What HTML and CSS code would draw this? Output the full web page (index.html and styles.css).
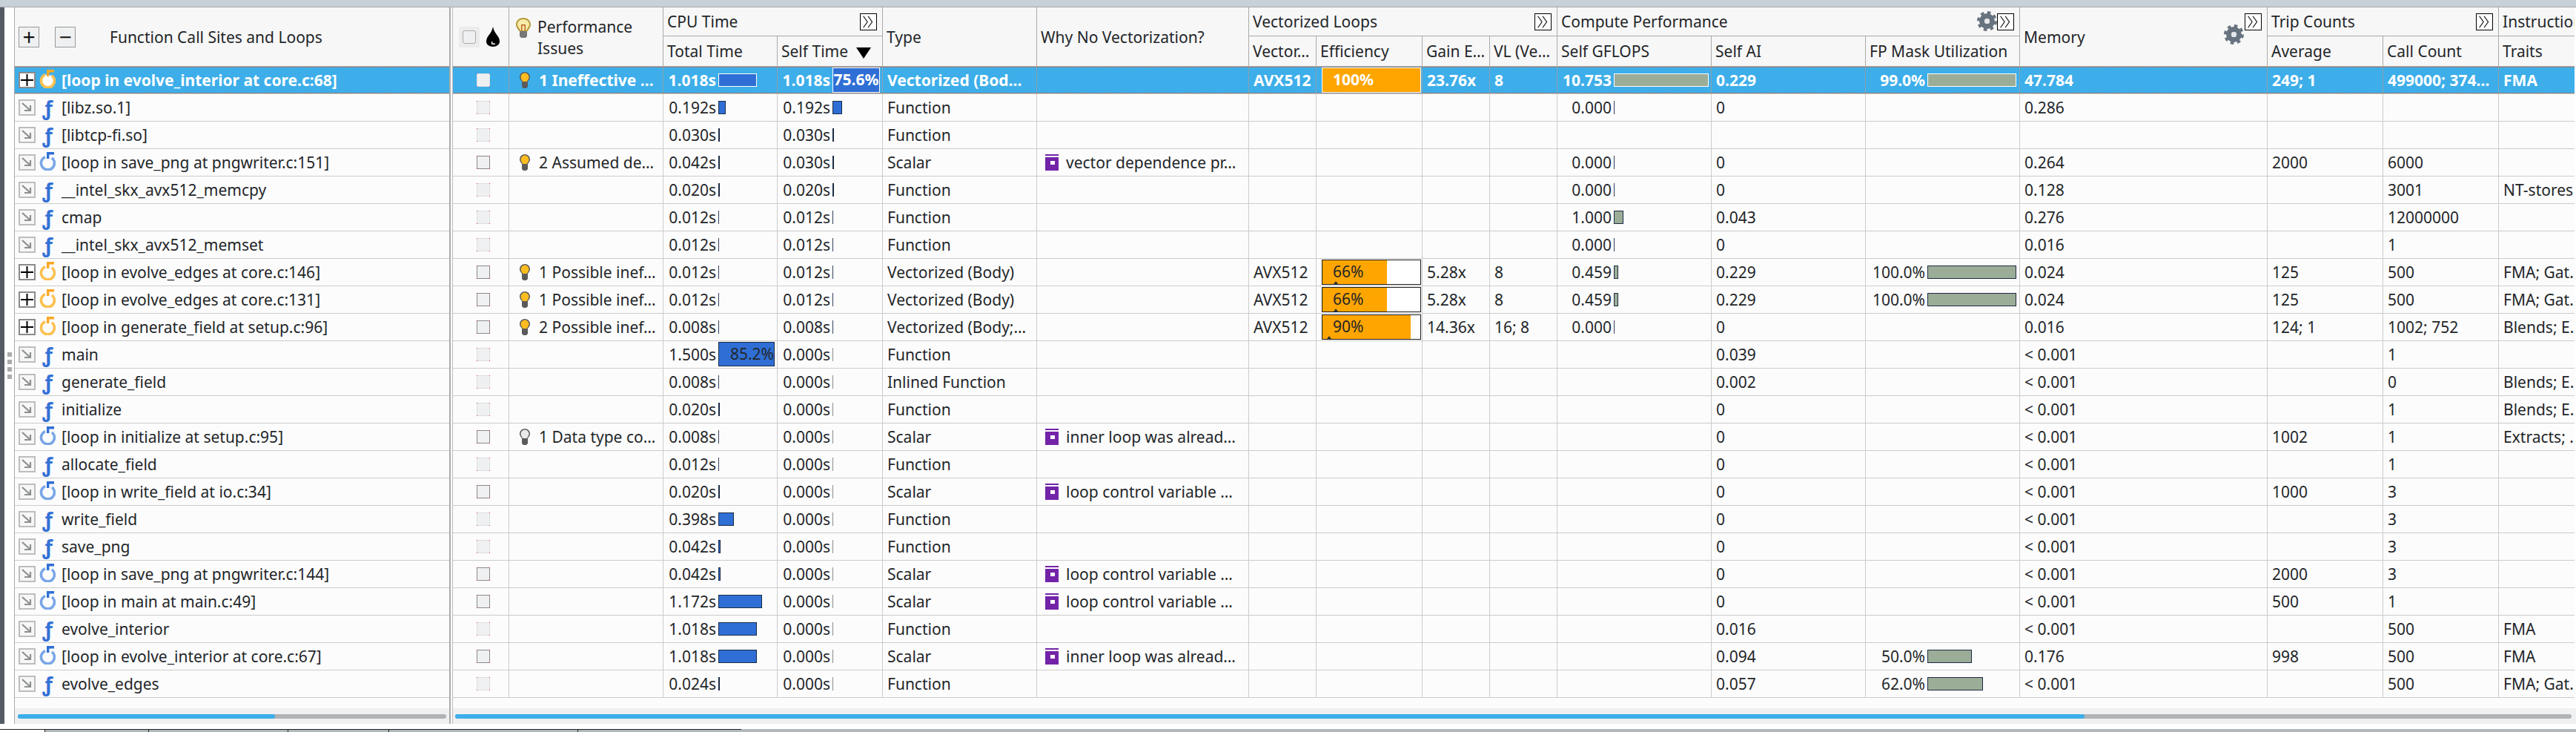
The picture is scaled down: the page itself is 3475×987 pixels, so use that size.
FILE: index.html
```html
<!DOCTYPE html>
<html>
<head>
<meta charset="utf-8">
<title>Survey Report</title>
<link rel="stylesheet" href="styles.css">
</head>
<body>
<svg class="sprite">
  <symbol id="i-loop" viewBox="0 0 22 25">
    <path d="M8 6.600A9 9 0 1 0 17 7.800" stroke-width="3.600" class="ring"/>
    <path d="M10 0h10v3.600h-6.600v5.400h-3.400z" class="flag"/>
  </symbol>
  <symbol id="i-plus" viewBox="0 0 19 18">
    <path d="M9.500 1v16M1 9h17" stroke="#000" stroke-width="2" fill="none"/>
  </symbol>
  <symbol id="i-arrow" viewBox="0 0 19 18">
    <path d="M3 3l11 10M14 6v7H6" stroke="#8d8f91" stroke-width="2.200" fill="none"/>
  </symbol>
  <symbol id="i-bulb" viewBox="0 0 16 22">
    <path d="M8 0c4 0 7 3 7 7 0 3-2 4-3 6H4C3 11 1 10 1 7c0-4 3-7 7-7z" fill="#5b5b5b"/>
    <path d="M8 1.500c3 0 5.500 2.500 5.500 5.500 0 2.500-2 4-2.500 6H5C4.500 11 2.500 9.500 2.500 7 2.500 4 5 1.500 8 1.500z" fill="currentColor"/>
    <path d="M4 13h8v7l-2 2H6l-2-2z" fill="#5b5b5b"/>
  </symbol>
  <symbol id="i-bulb-head" viewBox="0 0 20 27">
    <path d="M10 0c6 0 10 4 10 9 0 4-3 6-4 9H4C3 15 0 13 0 9c0-5 4-9 10-9z" fill="#b79a3a"/>
    <path d="M10 2c4.500 0 8 3 8 7 0 3-3 5-4 8H6C5 14 2 12 2 9c0-4 3.500-7 8-7z" fill="#f9ecaa"/>
    <path d="M7 9h6v8H7z" fill="#b8641e"/>
    <path d="M8.500 10.500h3V17h-3z" fill="#fff0b0"/>
    <path d="M5 18h10v7l-2 2H7l-2-2z" fill="#777"/>
  </symbol>
  <symbol id="i-drop" viewBox="0 0 18 27">
    <path d="M9 0c1 5 3 8 6 12 2 3 3 5 3 8 0 4-4 7-9 7s-9-3-9-7c0-3 1-5 3-8C6 8 8 5 9 0z" fill="#000"/>
    <path d="M7 20h1.500v4H7z" fill="#fff"/>
    <path d="M8.500 22.500H12V24H8.500z" fill="#fff"/>
  </symbol>
  <symbol id="i-book" viewBox="0 0 18 22">
    <path d="M0 0h18v2H0z" fill="#7323a8"/>
    <path d="M0 4h18v18H0z" fill="#7323a8"/>
    <path d="M7 9h6v5H7z" fill="#fff"/>
  </symbol>
  <symbol id="i-chev" viewBox="0 0 23 23">
    <path d="M4 3l6 8.500-6 8.500M11 3l6 8.500-6 8.500" stroke="#111" stroke-width="1.300" fill="none"/>
  </symbol>
  <symbol id="i-gear" viewBox="0 0 27 27">
    <circle cx="13.500" cy="13.500" r="11.500" stroke="#687380" stroke-width="4" stroke-dasharray="4.500 4.530" fill="none"/>
    <circle cx="13.500" cy="13.500" r="7" stroke="#687380" stroke-width="7" fill="none"/>
    <circle cx="13.500" cy="13.500" r="3.500" fill="#e4e7ea"/>
  </symbol>
</svg>

<div class="top-band"></div>

<div class="workspace">
  <div class="rail"></div>
  <div class="grip"><i></i><i></i><i></i><i></i></div>

  <div class="tree-pane">
    <div class="tree-head">
      <button class="head-btn">+</button>
      <button class="head-btn head-btn-minus">−</button>
      <span class="tree-title">Function Call Sites and Loops</span>
    </div>
    <div class="tree-rows">
      <div class="row sel"><span class="exp exp-plus"><svg><use href="#i-plus"/></svg></span><svg class="ic-loop hot"><use href="#i-loop"/></svg><span class="name">[loop in evolve_interior at core.c:68]</span></div>
      <div class="row"><span class="exp"><svg><use href="#i-arrow"/></svg></span><span class="ic-f">ƒ</span><span class="name">[libz.so.1]</span></div>
      <div class="row"><span class="exp"><svg><use href="#i-arrow"/></svg></span><span class="ic-f">ƒ</span><span class="name">[libtcp-fi.so]</span></div>
      <div class="row"><span class="exp"><svg><use href="#i-arrow"/></svg></span><svg class="ic-loop"><use href="#i-loop"/></svg><span class="name">[loop in save_png at pngwriter.c:151]</span></div>
      <div class="row"><span class="exp"><svg><use href="#i-arrow"/></svg></span><span class="ic-f">ƒ</span><span class="name">__intel_skx_avx512_memcpy</span></div>
      <div class="row"><span class="exp"><svg><use href="#i-arrow"/></svg></span><span class="ic-f">ƒ</span><span class="name">cmap</span></div>
      <div class="row"><span class="exp"><svg><use href="#i-arrow"/></svg></span><span class="ic-f">ƒ</span><span class="name">__intel_skx_avx512_memset</span></div>
      <div class="row"><span class="exp exp-plus"><svg><use href="#i-plus"/></svg></span><svg class="ic-loop hot"><use href="#i-loop"/></svg><span class="name">[loop in evolve_edges at core.c:146]</span></div>
      <div class="row"><span class="exp exp-plus"><svg><use href="#i-plus"/></svg></span><svg class="ic-loop hot"><use href="#i-loop"/></svg><span class="name">[loop in evolve_edges at core.c:131]</span></div>
      <div class="row"><span class="exp exp-plus"><svg><use href="#i-plus"/></svg></span><svg class="ic-loop hot"><use href="#i-loop"/></svg><span class="name">[loop in generate_field at setup.c:96]</span></div>
      <div class="row"><span class="exp"><svg><use href="#i-arrow"/></svg></span><span class="ic-f">ƒ</span><span class="name">main</span></div>
      <div class="row"><span class="exp"><svg><use href="#i-arrow"/></svg></span><span class="ic-f">ƒ</span><span class="name">generate_field</span></div>
      <div class="row"><span class="exp"><svg><use href="#i-arrow"/></svg></span><span class="ic-f">ƒ</span><span class="name">initialize</span></div>
      <div class="row"><span class="exp"><svg><use href="#i-arrow"/></svg></span><svg class="ic-loop"><use href="#i-loop"/></svg><span class="name">[loop in initialize at setup.c:95]</span></div>
      <div class="row"><span class="exp"><svg><use href="#i-arrow"/></svg></span><span class="ic-f">ƒ</span><span class="name">allocate_field</span></div>
      <div class="row"><span class="exp"><svg><use href="#i-arrow"/></svg></span><svg class="ic-loop"><use href="#i-loop"/></svg><span class="name">[loop in write_field at io.c:34]</span></div>
      <div class="row"><span class="exp"><svg><use href="#i-arrow"/></svg></span><span class="ic-f">ƒ</span><span class="name">write_field</span></div>
      <div class="row"><span class="exp"><svg><use href="#i-arrow"/></svg></span><span class="ic-f">ƒ</span><span class="name">save_png</span></div>
      <div class="row"><span class="exp"><svg><use href="#i-arrow"/></svg></span><svg class="ic-loop"><use href="#i-loop"/></svg><span class="name">[loop in save_png at pngwriter.c:144]</span></div>
      <div class="row"><span class="exp"><svg><use href="#i-arrow"/></svg></span><svg class="ic-loop"><use href="#i-loop"/></svg><span class="name">[loop in main at main.c:49]</span></div>
      <div class="row"><span class="exp"><svg><use href="#i-arrow"/></svg></span><span class="ic-f">ƒ</span><span class="name">evolve_interior</span></div>
      <div class="row"><span class="exp"><svg><use href="#i-arrow"/></svg></span><svg class="ic-loop"><use href="#i-loop"/></svg><span class="name">[loop in evolve_interior at core.c:67]</span></div>
      <div class="row"><span class="exp"><svg><use href="#i-arrow"/></svg></span><span class="ic-f">ƒ</span><span class="name">evolve_edges</span></div>
    </div>
    <div class="scroll scroll-left"><div class="track"><div class="thumb" style="width:60%"></div></div></div>
  </div>

  <div class="split-gap"></div>

  <div class="grid-pane">
    <div class="grid-wrap">
      <table class="grid">
        <colgroup>
          <col class="c-chk"><col class="c-perf"><col class="c-total"><col class="c-self"><col class="c-type"><col class="c-why">
          <col class="c-isa"><col class="c-eff"><col class="c-gain"><col class="c-vl">
          <col class="c-wide"><col class="c-wide"><col class="c-wide"><col class="c-mem"><col class="c-trip"><col class="c-trip"><col class="c-traits">
        </colgroup>
        <thead>
          <tr class="head-top">
            <th rowspan="2"><div class="head-chk"><span class="chk-wrap"><span class="chk-head"></span></span><svg class="ic-drop"><use href="#i-drop"/></svg></div></th>
            <th rowspan="2"><div class="head-perf"><svg class="ic-bulb-head"><use href="#i-bulb-head"/></svg><span>Performance<br>Issues</span></div></th>
            <th colspan="2"><div class="group"><span>CPU Time</span><svg class="chev"><use href="#i-chev"/></svg></div></th>
            <th rowspan="2">Type</th>
            <th rowspan="2">Why No Vectorization?</th>
            <th colspan="4"><div class="group"><span>Vectorized Loops</span><svg class="chev"><use href="#i-chev"/></svg></div></th>
            <th colspan="3"><div class="group"><span>Compute Performance</span><svg class="ic-gear"><use href="#i-gear"/></svg><svg class="chev chev-tight"><use href="#i-chev"/></svg></div></th>
            <th rowspan="2" class="head-mem">Memory<svg class="ic-gear mem-gear"><use href="#i-gear"/></svg><svg class="chev mem-chev"><use href="#i-chev"/></svg></th>
            <th colspan="2"><div class="group"><span>Trip Counts</span><svg class="chev"><use href="#i-chev"/></svg></div></th>
            <th>Instructions</th>
          </tr>
          <tr class="head-sub">
            <th>Total Time</th>
            <th>Self Time <span class="sort"></span></th>
            <th>Vector…</th>
            <th>Efficiency</th>
            <th>Gain E…</th>
            <th>VL (Ve…</th>
            <th>Self GFLOPS</th>
            <th>Self AI</th>
            <th>FP Mask Utilization</th>
            <th>Average</th>
            <th>Call Count</th>
            <th>Traits</th>
          </tr>
        </thead>
        <tbody>
          <tr class="sel">
            <td><div class="chk"></div></td>
            <td class="cell-icon"><div class="with-icon"><svg class="ic-bulb"><use href="#i-bulb"/></svg>1 Ineffective …</div></td>
            <td class="split"><div class="pair pair-t"><span class="num">1.018s</span><i class="bar" style="width:52px"></i></div></td>
            <td class="split"><div class="pair pair-t"><span class="num">1.018s</span><i class="bar bar-full bar-self">75.6%</i></div></td>
            <td>Vectorized (Bod…</td><td></td>
            <td>AVX512</td>
            <td class="split"><div class="eff"><div class="eff-fill" style="width:100%"></div><span class="eff-label">100%</span></div></td>
            <td>23.76x</td><td>8</td>
            <td class="split"><div class="pair pair-g"><span class="num">10.753</span><i class="bar bar-g" style="width:128px"></i></div></td>
            <td>0.229</td>
            <td class="split"><div class="pair pair-f"><span class="num">99.0%</span><i class="bar bar-g" style="width:120px"></i></div></td>
            <td>47.784</td><td>249; 1</td><td>499000; 374…</td><td>FMA</td>
          </tr>
          <tr>
            <td><div class="chk"></div></td><td></td>
            <td class="split"><div class="pair pair-t"><span class="num">0.192s</span><i class="bar" style="width:10px"></i></div></td>
            <td class="split"><div class="pair pair-t"><span class="num">0.192s</span><i class="bar" style="width:13px"></i></div></td>
            <td>Function</td><td></td><td></td><td></td><td></td><td></td>
            <td class="split"><div class="pair pair-g"><span class="num">0.000</span><i class="bar thin"></i></div></td>
            <td>0</td><td></td><td>0.286</td><td></td><td></td><td></td>
          </tr>
          <tr>
            <td><div class="chk"></div></td><td></td>
            <td class="split"><div class="pair pair-t"><span class="num">0.030s</span><i class="bar" style="width:2px"></i></div></td>
            <td class="split"><div class="pair pair-t"><span class="num">0.030s</span><i class="bar" style="width:2px"></i></div></td>
            <td>Function</td><td></td><td></td><td></td><td></td><td></td><td></td><td></td><td></td><td></td><td></td><td></td><td></td>
          </tr>
          <tr>
            <td><div class="chk chk-dark"></div></td>
            <td class="cell-icon"><div class="with-icon"><svg class="ic-bulb"><use href="#i-bulb"/></svg>2 Assumed de…</div></td>
            <td class="split"><div class="pair pair-t"><span class="num">0.042s</span><i class="bar" style="width:2px"></i></div></td>
            <td class="split"><div class="pair pair-t"><span class="num">0.030s</span><i class="bar" style="width:2px"></i></div></td>
            <td>Scalar</td>
            <td class="cell-icon"><div class="with-book"><svg class="ic-book"><use href="#i-book"/></svg>vector dependence pr…</div></td>
            <td></td><td></td><td></td><td></td>
            <td class="split"><div class="pair pair-g"><span class="num">0.000</span><i class="bar thin"></i></div></td>
            <td>0</td><td></td><td>0.264</td><td>2000</td><td>6000</td><td></td>
          </tr>
          <tr>
            <td><div class="chk"></div></td><td></td>
            <td class="split"><div class="pair pair-t"><span class="num">0.020s</span><i class="bar" style="width:2px"></i></div></td>
            <td class="split"><div class="pair pair-t"><span class="num">0.020s</span><i class="bar" style="width:2px"></i></div></td>
            <td>Function</td><td></td><td></td><td></td><td></td><td></td>
            <td class="split"><div class="pair pair-g"><span class="num">0.000</span><i class="bar thin"></i></div></td>
            <td>0</td><td></td><td>0.128</td><td></td><td>3001</td><td>NT-stores</td>
          </tr>
          <tr>
            <td><div class="chk"></div></td><td></td>
            <td class="split"><div class="pair pair-t"><span class="num">0.012s</span><i class="bar thin"></i></div></td>
            <td class="split"><div class="pair pair-t"><span class="num">0.012s</span><i class="bar thin"></i></div></td>
            <td>Function</td><td></td><td></td><td></td><td></td><td></td>
            <td class="split"><div class="pair pair-g"><span class="num">1.000</span><i class="bar bar-g" style="width:13px"></i></div></td>
            <td>0.043</td><td></td><td>0.276</td><td></td><td>12000000</td><td></td>
          </tr>
          <tr>
            <td><div class="chk"></div></td><td></td>
            <td class="split"><div class="pair pair-t"><span class="num">0.012s</span><i class="bar thin"></i></div></td>
            <td class="split"><div class="pair pair-t"><span class="num">0.012s</span><i class="bar thin"></i></div></td>
            <td>Function</td><td></td><td></td><td></td><td></td><td></td>
            <td class="split"><div class="pair pair-g"><span class="num">0.000</span><i class="bar thin"></i></div></td>
            <td>0</td><td></td><td>0.016</td><td></td><td>1</td><td></td>
          </tr>
          <tr>
            <td><div class="chk chk-dark"></div></td>
            <td class="cell-icon"><div class="with-icon"><svg class="ic-bulb"><use href="#i-bulb"/></svg>1 Possible inef…</div></td>
            <td class="split"><div class="pair pair-t"><span class="num">0.012s</span><i class="bar thin"></i></div></td>
            <td class="split"><div class="pair pair-t"><span class="num">0.012s</span><i class="bar thin"></i></div></td>
            <td>Vectorized (Body)</td><td></td><td>AVX512</td>
            <td class="split"><div class="eff"><div class="eff-fill" style="width:66%"></div><span class="eff-label">66%</span><i class="eff-tick"></i></div></td>
            <td>5.28x</td><td>8</td>
            <td class="split"><div class="pair pair-g"><span class="num">0.459</span><i class="bar bar-g" style="width:6px"></i></div></td>
            <td>0.229</td>
            <td class="split"><div class="pair pair-f"><span class="num">100.0%</span><i class="bar bar-g" style="width:120px"></i></div></td>
            <td>0.024</td><td>125</td><td>500</td><td>FMA; Gat…</td>
          </tr>
          <tr>
            <td><div class="chk chk-dark"></div></td>
            <td class="cell-icon"><div class="with-icon"><svg class="ic-bulb"><use href="#i-bulb"/></svg>1 Possible inef…</div></td>
            <td class="split"><div class="pair pair-t"><span class="num">0.012s</span><i class="bar thin"></i></div></td>
            <td class="split"><div class="pair pair-t"><span class="num">0.012s</span><i class="bar thin"></i></div></td>
            <td>Vectorized (Body)</td><td></td><td>AVX512</td>
            <td class="split"><div class="eff"><div class="eff-fill" style="width:66%"></div><span class="eff-label">66%</span><i class="eff-tick"></i></div></td>
            <td>5.28x</td><td>8</td>
            <td class="split"><div class="pair pair-g"><span class="num">0.459</span><i class="bar bar-g" style="width:6px"></i></div></td>
            <td>0.229</td>
            <td class="split"><div class="pair pair-f"><span class="num">100.0%</span><i class="bar bar-g" style="width:120px"></i></div></td>
            <td>0.024</td><td>125</td><td>500</td><td>FMA; Gat…</td>
          </tr>
          <tr>
            <td><div class="chk chk-dark"></div></td>
            <td class="cell-icon"><div class="with-icon"><svg class="ic-bulb"><use href="#i-bulb"/></svg>2 Possible inef…</div></td>
            <td class="split"><div class="pair pair-t"><span class="num">0.008s</span><i class="bar thin"></i></div></td>
            <td class="split"><div class="pair pair-t"><span class="num">0.008s</span><i class="bar thin"></i></div></td>
            <td>Vectorized (Body;…</td><td></td><td>AVX512</td>
            <td class="split"><div class="eff"><div class="eff-fill" style="width:90%"></div><span class="eff-label">90%</span><i class="eff-tick eff-tick-near"></i></div></td>
            <td>14.36x</td><td>16; 8</td>
            <td class="split"><div class="pair pair-g"><span class="num">0.000</span><i class="bar thin"></i></div></td>
            <td>0</td><td></td><td>0.016</td><td>124; 1</td><td>1002; 752</td><td>Blends; E…</td>
          </tr>
          <tr>
            <td><div class="chk"></div></td><td></td>
            <td class="split"><div class="pair pair-t"><span class="num">1.500s</span><i class="bar bar-full bar-main">85.2%</i></div></td>
            <td class="split"><div class="pair pair-t"><span class="num">0.000s</span><i class="bar thin zero"></i></div></td>
            <td>Function</td><td></td><td></td><td></td><td></td><td></td><td></td>
            <td>0.039</td><td></td><td>&lt; 0.001</td><td></td><td>1</td><td></td>
          </tr>
          <tr>
            <td><div class="chk"></div></td><td></td>
            <td class="split"><div class="pair pair-t"><span class="num">0.008s</span><i class="bar thin"></i></div></td>
            <td class="split"><div class="pair pair-t"><span class="num">0.000s</span><i class="bar thin zero"></i></div></td>
            <td>Inlined Function</td><td></td><td></td><td></td><td></td><td></td><td></td>
            <td>0.002</td><td></td><td>&lt; 0.001</td><td></td><td>0</td><td>Blends; E…</td>
          </tr>
          <tr>
            <td><div class="chk"></div></td><td></td>
            <td class="split"><div class="pair pair-t"><span class="num">0.020s</span><i class="bar" style="width:2px"></i></div></td>
            <td class="split"><div class="pair pair-t"><span class="num">0.000s</span><i class="bar thin zero"></i></div></td>
            <td>Function</td><td></td><td></td><td></td><td></td><td></td><td></td>
            <td>0</td><td></td><td>&lt; 0.001</td><td></td><td>1</td><td>Blends; E…</td>
          </tr>
          <tr>
            <td><div class="chk chk-dark"></div></td>
            <td class="cell-icon"><div class="with-icon"><svg class="ic-bulb bulb-off"><use href="#i-bulb"/></svg>1 Data type co…</div></td>
            <td class="split"><div class="pair pair-t"><span class="num">0.008s</span><i class="bar thin"></i></div></td>
            <td class="split"><div class="pair pair-t"><span class="num">0.000s</span><i class="bar thin zero"></i></div></td>
            <td>Scalar</td>
            <td class="cell-icon"><div class="with-book"><svg class="ic-book"><use href="#i-book"/></svg>inner loop was alread…</div></td>
            <td></td><td></td><td></td><td></td><td></td>
            <td>0</td><td></td><td>&lt; 0.001</td><td>1002</td><td>1</td><td>Extracts; …</td>
          </tr>
          <tr>
            <td><div class="chk"></div></td><td></td>
            <td class="split"><div class="pair pair-t"><span class="num">0.012s</span><i class="bar thin"></i></div></td>
            <td class="split"><div class="pair pair-t"><span class="num">0.000s</span><i class="bar thin zero"></i></div></td>
            <td>Function</td><td></td><td></td><td></td><td></td><td></td><td></td>
            <td>0</td><td></td><td>&lt; 0.001</td><td></td><td>1</td><td></td>
          </tr>
          <tr>
            <td><div class="chk chk-dark"></div></td><td></td>
            <td class="split"><div class="pair pair-t"><span class="num">0.020s</span><i class="bar" style="width:2px"></i></div></td>
            <td class="split"><div class="pair pair-t"><span class="num">0.000s</span><i class="bar thin zero"></i></div></td>
            <td>Scalar</td>
            <td class="cell-icon"><div class="with-book"><svg class="ic-book"><use href="#i-book"/></svg>loop control variable …</div></td>
            <td></td><td></td><td></td><td></td><td></td>
            <td>0</td><td></td><td>&lt; 0.001</td><td>1000</td><td>3</td><td></td>
          </tr>
          <tr>
            <td><div class="chk"></div></td><td></td>
            <td class="split"><div class="pair pair-t"><span class="num">0.398s</span><i class="bar" style="width:21px"></i></div></td>
            <td class="split"><div class="pair pair-t"><span class="num">0.000s</span><i class="bar thin zero"></i></div></td>
            <td>Function</td><td></td><td></td><td></td><td></td><td></td><td></td>
            <td>0</td><td></td><td>&lt; 0.001</td><td></td><td>3</td><td></td>
          </tr>
          <tr>
            <td><div class="chk"></div></td><td></td>
            <td class="split"><div class="pair pair-t"><span class="num">0.042s</span><i class="bar" style="width:3px"></i></div></td>
            <td class="split"><div class="pair pair-t"><span class="num">0.000s</span><i class="bar thin zero"></i></div></td>
            <td>Function</td><td></td><td></td><td></td><td></td><td></td><td></td>
            <td>0</td><td></td><td>&lt; 0.001</td><td></td><td>3</td><td></td>
          </tr>
          <tr>
            <td><div class="chk chk-dark"></div></td><td></td>
            <td class="split"><div class="pair pair-t"><span class="num">0.042s</span><i class="bar" style="width:3px"></i></div></td>
            <td class="split"><div class="pair pair-t"><span class="num">0.000s</span><i class="bar thin zero"></i></div></td>
            <td>Scalar</td>
            <td class="cell-icon"><div class="with-book"><svg class="ic-book"><use href="#i-book"/></svg>loop control variable …</div></td>
            <td></td><td></td><td></td><td></td><td></td>
            <td>0</td><td></td><td>&lt; 0.001</td><td>2000</td><td>3</td><td></td>
          </tr>
          <tr>
            <td><div class="chk chk-dark"></div></td><td></td>
            <td class="split"><div class="pair pair-t"><span class="num">1.172s</span><i class="bar" style="width:59px"></i></div></td>
            <td class="split"><div class="pair pair-t"><span class="num">0.000s</span><i class="bar thin zero"></i></div></td>
            <td>Scalar</td>
            <td class="cell-icon"><div class="with-book"><svg class="ic-book"><use href="#i-book"/></svg>loop control variable …</div></td>
            <td></td><td></td><td></td><td></td><td></td>
            <td>0</td><td></td><td>&lt; 0.001</td><td>500</td><td>1</td><td></td>
          </tr>
          <tr>
            <td><div class="chk"></div></td><td></td>
            <td class="split"><div class="pair pair-t"><span class="num">1.018s</span><i class="bar" style="width:52px"></i></div></td>
            <td class="split"><div class="pair pair-t"><span class="num">0.000s</span><i class="bar thin zero"></i></div></td>
            <td>Function</td><td></td><td></td><td></td><td></td><td></td><td></td>
            <td>0.016</td><td></td><td>&lt; 0.001</td><td></td><td>500</td><td>FMA</td>
          </tr>
          <tr>
            <td><div class="chk chk-dark"></div></td><td></td>
            <td class="split"><div class="pair pair-t"><span class="num">1.018s</span><i class="bar" style="width:52px"></i></div></td>
            <td class="split"><div class="pair pair-t"><span class="num">0.000s</span><i class="bar thin zero"></i></div></td>
            <td>Scalar</td>
            <td class="cell-icon"><div class="with-book"><svg class="ic-book"><use href="#i-book"/></svg>inner loop was alread…</div></td>
            <td></td><td></td><td></td><td></td><td></td>
            <td>0.094</td>
            <td class="split"><div class="pair pair-f"><span class="num">50.0%</span><i class="bar bar-g" style="width:60px"></i></div></td>
            <td>0.176</td><td>998</td><td>500</td><td>FMA</td>
          </tr>
          <tr>
            <td><div class="chk"></div></td><td></td>
            <td class="split"><div class="pair pair-t"><span class="num">0.024s</span><i class="bar" style="width:2px"></i></div></td>
            <td class="split"><div class="pair pair-t"><span class="num">0.000s</span><i class="bar thin zero"></i></div></td>
            <td>Function</td><td></td><td></td><td></td><td></td><td></td><td></td>
            <td>0.057</td>
            <td class="split"><div class="pair pair-f"><span class="num">62.0%</span><i class="bar bar-g" style="width:75px"></i></div></td>
            <td>&lt; 0.001</td><td></td><td>500</td><td>FMA; Gat…</td>
          </tr>
        </tbody>
      </table>
    </div>
    <div class="scroll scroll-right"><div class="track"><div class="thumb" style="width:77%"></div></div></div>
  </div>
</div>

<div class="bottom-gap"></div>
<div class="tabs">
  <div class="tab tab-first"></div>
  <div class="tab tab-b"></div>
  <div class="tab tab-c"></div>
  <div class="tab tab-d"></div>
  <div class="tab tab-e"></div>
  <div class="tab tab-f"></div>
</div>
</body>
</html>
```

FILE: styles.css
```css
html, body {
    margin: 0;
    height: 987px;
    overflow: hidden;
    background: #fff;
}
body {
    display: flex;
    flex-direction: column;
    font-family: "Noto Sans", sans-serif;
    font-size: 21px;
    color: #232629;
}
.sprite { display: none; }

.top-band {
    height: 9px;
    flex: none;
    background: #c8d0d8;
    border-bottom: 1px solid #a8a8a8;
}
.workspace {
    flex: 1;
    display: flex;
    min-height: 0;
}
.rail {
    width: 6px;
    flex: none;
    background: #555b66;
}
.grip {
    width: 13px;
    flex: none;
    display: flex;
    flex-direction: column;
    justify-content: center;
    gap: 4px;
    padding-left: 4px;
    box-sizing: border-box;
}
.grip i {
    width: 6px;
    height: 6px;
    background: #ababab;
}

/* left pane */
.tree-pane {
    width: 589px;
    flex: none;
    box-sizing: border-box;
    border-left: 1px solid #aaa;
    border-right: 2px solid #aaa;
    display: flex;
    flex-direction: column;
    background: #fcfcfc;
}
.tree-head {
    height: 80px;
    flex: none;
    box-sizing: border-box;
    border-bottom: 1px solid #aaa;
    background: #f7f7f7;
    display: flex;
    align-items: center;
    padding-left: 5px;
}
.head-btn {
    width: 28px;
    height: 28px;
    padding: 0;
    border: 1px solid #999;
    background: #eff0f1;
    color: #111;
    font: 30px/24px "Noto Sans", sans-serif;
}
.head-btn-minus { margin-left: 21px; }
.tree-title { margin-left: 46px; }
.tree-rows { flex: 1; }
.row {
    height: 37px;
    box-sizing: border-box;
    border-bottom: 1px solid #ccc;
    display: flex;
    align-items: center;
    padding-left: 5px;
    white-space: nowrap;
}
.exp {
    width: 23px;
    height: 22px;
    flex: none;
    box-sizing: border-box;
    border: 2px solid #bdbdbd;
    background: #f7f7f7;
    margin-top: -1px;
}
.exp svg {
    display: block;
    width: 19px;
    height: 18px;
}
.exp-plus {
    border-color: #8a8a8a;
    background: #fff;
}
.ic-loop {
    width: 22px;
    height: 25px;
    flex: none;
    margin: -3px 0 0 5px;
    --ring: #7aa6e8;
    --flag: #2f6fd5;
    --ring-fill: none;
}
.ic-loop.hot {
    --ring: #fcc04e;
    --flag: #f9a825;
}
.sel .ic-loop { --ring-fill: #fff; }
.ring {
    fill: var(--ring-fill);
    stroke: var(--ring);
}
.flag { fill: var(--flag); }
.ic-f {
    width: 22px;
    flex: none;
    margin-left: 5px;
    text-align: center;
    color: #3471d6;
    font: bold 27px/1 "Noto Sans", sans-serif;
}
.name { margin-left: 8px; }

/* selected row, both panes */
.row.sel, tr.sel td {
    background:
        repeating-linear-gradient(90deg, #d9541e 0 1px, transparent 1px 2px) 0 0 / 100% 1px no-repeat,
        repeating-linear-gradient(90deg, #d9541e 0 1px, transparent 1px 2px) 0 100% / 100% 1px no-repeat,
        #3daee9;
    color: #fff;
    font-weight: bold;
}

.split-gap {
    width: 2px;
    flex: none;
}

/* right pane */
.grid-pane {
    flex: 1;
    min-width: 0;
    border-left: 1px solid #bbb;
    display: flex;
    flex-direction: column;
}
.grid-wrap {
    flex: 1;
    min-height: 0;
    overflow: hidden;
    background: #fcfcfc;
    margin-right: 2px;
}
.grid {
    width: 2862px;
    table-layout: fixed;
    border-collapse: separate;
    border-spacing: 0;
}
.c-chk { width: 76px; }
.c-perf { width: 208px; }
.c-total { width: 154px; }
.c-self { width: 142px; }
.c-type { width: 208px; }
.c-why { width: 286px; }
.c-isa { width: 91px; }
.c-eff { width: 143px; }
.c-gain, .c-vl { width: 91px; }
.c-wide { width: 208px; }
.c-mem { width: 334px; }
.c-trip { width: 156px; }
.c-traits { width: 102px; }

th {
    box-sizing: border-box;
    padding: 0 0 0 5px;
    background: #f7f7f7;
    font-weight: normal;
    text-align: left;
    white-space: nowrap;
    overflow: hidden;
    border-right: 1px solid #aaa;
    border-bottom: 1px solid #aaa;
}
.head-top { height: 39px; }
.head-sub { height: 41px; }
.head-top th:last-child, .head-sub th:last-child { border-right: 0; }
td {
    box-sizing: border-box;
    height: 37px;
    padding: 0 6px;
    white-space: nowrap;
    overflow: hidden;
    border-right: 1px solid #ccc;
    border-bottom: 1px solid #ccc;
    line-height: 1;
}
td:last-child { border-right: 0; }
tr.sel td { border-right-color: #8b9fb0; }

.group {
    display: flex;
    align-items: center;
}
.group span { margin-right: auto; }
.chev {
    width: 23px;
    height: 23px;
    flex: none;
    box-sizing: border-box;
    border: 1px solid #000;
    background: #fff;
    margin-right: 7px;
}
.ic-gear {
    width: 27px;
    height: 27px;
    flex: none;
    margin-top: -2px;
}
.head-mem { position: relative; }
.mem-gear {
    position: absolute;
    right: 31px;
    top: 25px;
}
.mem-chev {
    position: absolute;
    right: 0;
    top: 8px;
}
.head-chk {
    display: flex;
    align-items: center;
    padding-left: 3px;
}
.chk-wrap {
    width: 28px;
    height: 28px;
    background: #ececec;
    display: flex;
    align-items: center;
    justify-content: center;
}
.chk-head {
    width: 18px;
    height: 18px;
    box-sizing: border-box;
    border: 1px solid #aaa;
    border-radius: 3px;
    background: #eff0f1;
}
.ic-drop {
    width: 18px;
    height: 27px;
    margin-left: 9px;
}
.head-perf {
    display: flex;
    align-items: flex-start;
    line-height: 29px;
    padding-top: 3px;
}
.ic-bulb-head {
    width: 20px;
    height: 27px;
    flex: none;
    margin: 2px 9px 0 4px;
}
.sort {
    display: inline-block;
    width: 0;
    height: 0;
    margin-left: 5px;
    border-left: 10px solid transparent;
    border-right: 10px solid transparent;
    border-top: 15px solid #000;
    vertical-align: -2px;
}

/* checkboxes in the rows, with their pink corner pixels */
.chk {
    width: 18px;
    height: 18px;
    margin-left: 26px;
    background:
        linear-gradient(#e0309a, #e0309a) 0 0 / 1px 1px no-repeat,
        linear-gradient(#e0309a, #e0309a) 100% 0 / 1px 1px no-repeat,
        linear-gradient(#e0309a, #e0309a) 0 100% / 1px 1px no-repeat,
        linear-gradient(#e0309a, #e0309a) 100% 100% / 1px 1px no-repeat,
        #dedede;
    padding: 1px;
    box-sizing: border-box;
}
.chk::before {
    content: "";
    display: block;
    height: 16px;
    background: #eff0f1;
}
.chk-dark { background-color: #8a8a8a; }

.cell-icon { padding: 0; }
.with-icon, .with-book {
    display: flex;
    align-items: center;
}
.with-icon { padding-left: 13px; }
.ic-bulb {
    width: 16px;
    height: 22px;
    flex: none;
    margin-right: 11px;
    color: #fdbc1f;
}
.bulb-off { color: #e8e8e8; }
.with-book { padding-left: 11px; }
.ic-book {
    width: 18px;
    height: 22px;
    flex: none;
    margin-right: 10px;
}

.split { padding: 0; }
.pair {
    display: flex;
    align-items: center;
    height: 36px;
}
.num {
    flex: none;
    box-sizing: border-box;
    padding-right: 3px;
    text-align: right;
}
.pair-t .num { width: 74px; }
.pair-g .num { width: 76px; }
.pair-f .num { width: 83px; }
.bar {
    display: block;
    flex: none;
    box-sizing: border-box;
    height: 18px;
    margin-top: -1px;
    background: #2f6fd5;
    border: 1px solid #1d2b45;
    font-style: normal;
}
.bar-g { background: #9bad97; }
.thin {
    width: 1px;
    border: 0;
    background: #33415c;
}
.zero { background: #8b8b8b; }
.bar-full {
    height: 33px;
    text-align: right;
    line-height: 31px;
}
.bar-main { width: 76px; }
.bar-self { width: 64px; height: 34px; text-align: center; }
.sel .bar { border-color: #fff; }

.eff {
    position: relative;
    width: 134px;
    height: 34px;
    margin-left: 7px;
    box-sizing: border-box;
    border: 1px solid #1d1d1d;
    background: #fff;
}
.sel .eff { border-color: #fff; background: #ffa500; }
.eff-fill {
    height: 100%;
    background: #ffa500;
}
.eff-label {
    position: absolute;
    left: 14px;
    top: 0;
    line-height: 30px;
}
.eff-tick {
    position: absolute;
    left: 15px;
    bottom: 0;
    border-left: 3px solid transparent;
    border-right: 3px solid transparent;
    border-bottom: 4px solid #333;
}
.eff-tick-near { left: 6px; }

/* horizontal scrollbars */
.scroll {
    height: 21px;
    flex: none;
    background: #eff0f1;
    display: flex;
    align-items: center;
}
.scroll-left { padding: 0 4px; }
.scroll-right { padding: 0 6px 0 3px; }
.track {
    flex: 1;
    height: 6px;
    border-radius: 3px;
    background: #b0b2b4;
}
.thumb {
    height: 100%;
    border-radius: 3px;
    background: #3daee9;
}

.bottom-gap {
    height: 7px;
    flex: none;
}
.tabs {
    height: 4px;
    flex: none;
    display: flex;
    background: #b0b8bc;
}
.tab {
    box-sizing: border-box;
    border-top: 1px solid #222;
    border-right: 1px solid #222;
}
.tab-first { width: 61px; background: #fff; }
.tab-b { width: 140px; }
.tab-c { width: 188px; }
.tab-d { width: 136px; }
.tab-e { width: 255px; }
.tab-f { width: 220px; border-right: 0; }
```
